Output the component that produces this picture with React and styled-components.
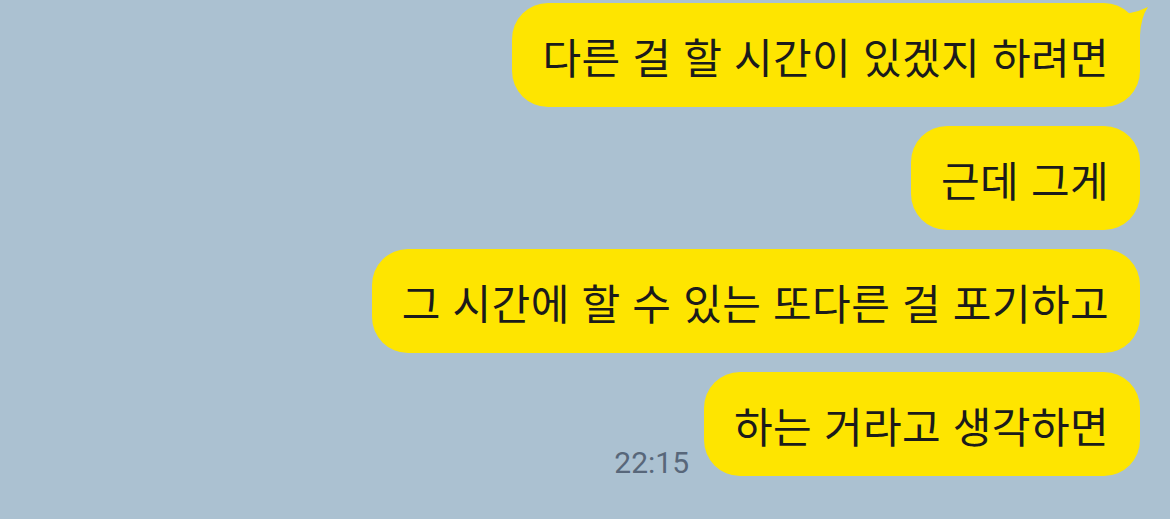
import React from 'react'
import styled, { createGlobalStyle } from 'styled-components'

const Global = createGlobalStyle`
  html, body {
    margin: 0;
    padding: 0;
    background: #abc1d1;
  }
  body {
    font-family: "Noto Sans CJK KR", "Noto Sans", sans-serif;
  }
`

const Chat = styled.div`
  width: 1170px;
  height: 519px;
  box-sizing: border-box;
  padding: 3px 30px 0 0;
  display: flex;
  flex-direction: column;
  align-items: flex-end;
  gap: 19px;
  overflow: hidden;
`

const Row = styled.div`
  display: flex;
  align-items: flex-end;
  gap: 15px;
`

const Bubble = styled.div`
  position: relative;
  height: 104px;
  box-sizing: border-box;
  padding: 0 31px 0 30px;
  display: flex;
  align-items: center;
  background: #fee500;
  border-radius: 36px;
  color: #1b1b1b;
  font-size: 42px;
  letter-spacing: 0.4px;
  word-spacing: 2px;
  white-space: nowrap;
`

// little tail on the first bubble of a group
const Tail = styled.svg`
  position: absolute;
  top: 0;
  right: -10px;
  width: 30px;
  height: 44px;
`

const Time = styled.span`
  font-family: Roboto, "Noto Sans", sans-serif;
  font-size: 30px;
  line-height: 1;
  color: #58677a;
  margin-bottom: -2px;
`

const messages = [
  '다른 걸 할 시간이 있겠지 하려면',
  '근데 그게',
  '그 시간에 할 수 있는 또다른 걸 포기하고',
  '하는 거라고 생각하면'
]

export default function App() {
  return (
    <>
      <Global />
      <Chat>
        {messages.map((text, i) => (
          <Row key={i}>
            {i === messages.length - 1 && <Time>22:15</Time>}
            <Bubble>
              {i === 0 && (
                <Tail viewBox='0 0 30 44'>
                  <path d='M0 14 L10 10 Q20 8 28 4 Q21 14 20 32 L20 44 L0 44 Z' fill='#fee500' />
                </Tail>
              )}
              {text}
            </Bubble>
          </Row>
        ))}
      </Chat>
    </>
  )
}
